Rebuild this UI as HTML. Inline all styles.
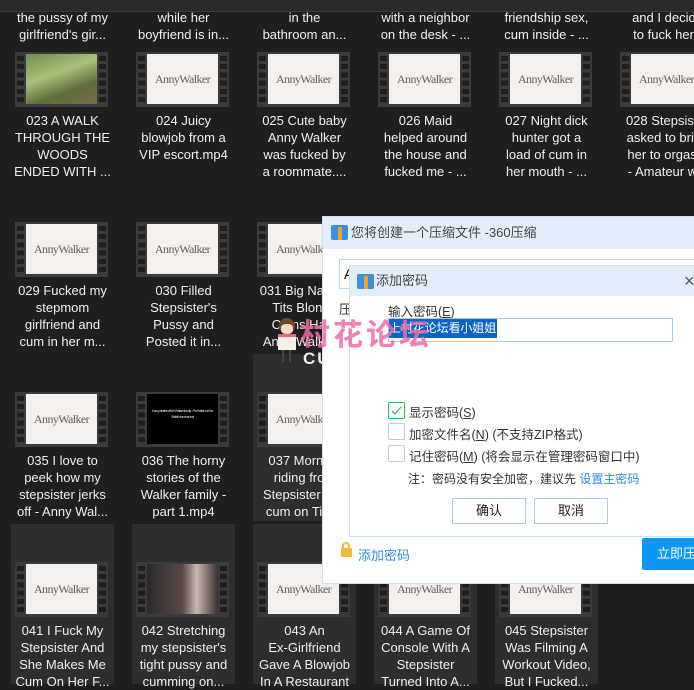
<!DOCTYPE html>
<html><head><meta charset="utf-8"><style>
*{margin:0;padding:0;box-sizing:border-box}
body{width:694px;height:681px;overflow:hidden;background:#1f1f1f;position:relative;font-family:"Liberation Sans","Noto Sans CJK SC",sans-serif}
.top{position:absolute;left:0;top:0;width:694px;height:12px;background:#2a2a2a;border-bottom:1px solid #3c3c3c}
.c{position:absolute;width:103px;height:170px;color:#f0f0f0;font-size:13px;line-height:17px;text-align:center}
.sel{background:#2e2e2e}
.t{position:absolute;left:4px;top:38px;width:93px;height:55px;background:#3b3b3b}
.t:before,.t:after{content:"";position:absolute;top:4px;width:7px;height:47px;background:repeating-linear-gradient(#1e1e1e 0 5px,transparent 5px 8.2px)}
.t:before{left:2px}.t:after{right:2px}
.im{position:absolute;left:11px;top:2px;width:71px;height:50px;background:#f4f0ee;color:#6a5a5e;font-family:"Liberation Serif",serif;font-size:12px;line-height:50px;letter-spacing:-.6px;white-space:nowrap;overflow:hidden}
.tx{position:absolute;left:0;width:103px;top:98px}
.row0{position:absolute;color:#f0f0f0;font-size:13px;line-height:17px;text-align:center;width:103px}
.dlg{position:absolute;left:322px;top:216px;width:380px;height:368px;background:#fff;border:1px solid #cfe0f0}
.tb{height:32px;background:#e2effb;font-size:13px;color:#444;line-height:32px;padding-left:28px;position:relative}
.ico{position:absolute;left:8px;top:8px;width:17px;height:15px;background:#3b8fe0;border-radius:2px}
.ico:after{content:"";position:absolute;left:7px;top:2px;width:4px;height:13px;background:#e9a52a}
.in{position:absolute;left:349px;top:265px;width:360px;height:272px;background:#fff;border:1px solid #cfe0f0}
.f{position:absolute;font-size:12.5px;color:#333}
.cb{position:absolute;left:388px;width:17px;height:17px;border:1px solid #c9c9c9;border-radius:2px;background:#fff}
.btn{position:absolute;top:498px;width:74px;height:26px;border:1px solid #aacbe8;background:#fff;font-size:13px;line-height:24px;text-align:center;color:#222}
</style></head><body>
<div class="top"></div>

<div class="row0" style="left:11px;top:9px">the pussy of my<br>girlfriend's gir...</div>
<div class="row0" style="left:132px;top:9px">while her<br>boyfriend is in...</div>
<div class="row0" style="left:253px;top:9px">in the<br>bathroom an...</div>
<div class="row0" style="left:374px;top:9px">with a neighbor<br>on the desk - ...</div>
<div class="row0" style="left:495px;top:9px">friendship sex,<br>cum inside - ...</div>
<div class="row0" style="left:616px;top:9px">and I decide<br>to fuck her -</div>

<div class="c" style="left:11px;top:14px"><div class="t"><div class="im" style="background:linear-gradient(160deg,#6f8f4a,#a9c07a 40%,#5f6f3a 70%,#7a6a4a)"></div></div><div class="tx">023 A WALK<br>THROUGH THE<br>WOODS<br>ENDED WITH ...</div></div>
<div class="c" style="left:132px;top:14px"><div class="t"><div class="im">AnnyWalker</div></div><div class="tx">024 Juicy<br>blowjob from a<br>VIP escort.mp4</div></div>
<div class="c" style="left:253px;top:14px"><div class="t"><div class="im">AnnyWalker</div></div><div class="tx">025 Cute baby<br>Anny Walker<br>was fucked by<br>a roommate....</div></div>
<div class="c" style="left:374px;top:14px"><div class="t"><div class="im">AnnyWalker</div></div><div class="tx">026 Maid<br>helped around<br>the house and<br>fucked me - ...</div></div>
<div class="c" style="left:495px;top:14px"><div class="t"><div class="im">AnnyWalker</div></div><div class="tx">027 Night dick<br>hunter got a<br>load of cum in<br>her mouth - ...</div></div>
<div class="c" style="left:616px;top:14px"><div class="t"><div class="im">AnnyWalker</div></div><div class="tx">028 Stepsister<br>asked to bring<br>her to orgasm<br>- Amateur w...</div></div>

<div class="c" style="left:11px;top:184px"><div class="t"><div class="im">AnnyWalker</div></div><div class="tx">029 Fucked my<br>stepmom<br>girlfriend and<br>cum in her m...</div></div>
<div class="c" style="left:132px;top:184px"><div class="t"><div class="im">AnnyWalker</div></div><div class="tx">030 Filled<br>Stepsister's<br>Pussy and<br>Posted it in...</div></div>
<div class="c" style="left:253px;top:184px"><div class="t"><div class="im">AnnyWalker</div></div><div class="tx">031 Big Natural<br>Tits Blonde<br>Cums Hard<br>Anny Walker...</div></div>

<div class="c" style="left:11px;top:354px"><div class="t"><div class="im">AnnyWalker</div></div><div class="tx">035 I love to<br>peek how my<br>stepsister jerks<br>off - Anny Wal...</div></div>
<div class="c" style="left:132px;top:354px"><div class="t"><div class="im" style="background:#000;color:#ddd;font-size:4px;line-height:6px;padding-top:14px;font-family:'Liberation Sans';white-space:normal">horny stories of the Walker family - Pa Watch on the BellaMorr channel</div></div><div class="tx">036 The horny<br>stories of the<br>Walker family -<br>part 1.mp4</div></div>
<div class="c sel" style="left:253px;top:354px;height:167px"><div class="t"><div class="im">AnnyWalker</div></div><div class="tx">037 Morning<br>riding from<br>Stepsister and<br>cum on Tits...</div></div>

<div class="c sel" style="left:11px;top:524px;height:160px"><div class="t"><div class="im">AnnyWalker</div></div><div class="tx">041 I Fuck My<br>Stepsister And<br>She Makes Me<br>Cum On Her F...</div></div>
<div class="c sel" style="left:132px;top:524px;height:160px"><div class="t"><div class="im" style="background:linear-gradient(90deg,#2a2a2e,#5a4a48 50%,#c9b8b0 70%,#3a3030)"></div></div><div class="tx">042 Stretching<br>my stepsister's<br>tight pussy and<br>cumming on...</div></div>
<div class="c sel" style="left:253px;top:524px;height:160px"><div class="t"><div class="im">AnnyWalker</div></div><div class="tx">043 An<br>Ex-Girlfriend<br>Gave A Blowjob<br>In A Restaurant</div></div>
<div class="c sel" style="left:374px;top:524px;height:160px"><div class="t"><div class="im">AnnyWalker</div></div><div class="tx">044 A Game Of<br>Console With A<br>Stepsister<br>Turned Into A...</div></div>
<div class="c sel" style="left:495px;top:524px;height:160px"><div class="t"><div class="im">AnnyWalker</div></div><div class="tx">045 Stepsister<br>Was Filming A<br>Workout Video,<br>But I Fucked...</div></div>

<div style="position:absolute;left:276px;top:318px;width:22px;height:46px">
<div style="position:absolute;left:3px;top:0;width:16px;height:16px;border-radius:50%;background:#6b4a2a"></div>
<div style="position:absolute;left:5px;top:6px;width:12px;height:10px;border-radius:40%;background:#f6dcc4"></div>
<div style="position:absolute;left:2px;top:16px;width:18px;height:16px;background:#f4eee8;border-top:3px solid #e86a8a"></div>
<div style="position:absolute;left:6px;top:32px;width:2px;height:12px;background:#444"></div>
<div style="position:absolute;left:13px;top:32px;width:2px;height:12px;background:#444"></div>
</div>
<div style="position:absolute;left:303px;top:349px;color:#eee;font-size:17px;font-weight:bold;letter-spacing:2px">CU</div>

<div class="dlg">
<div class="tb"><span class="ico"></span>您将创建一个压缩文件 -360压缩</div>
<div style="position:absolute;left:16px;top:42px;width:380px;height:30px;border:1px solid #b8d6ee;font-size:14px;line-height:28px;padding-left:4px">A</div>
<div class="f" style="left:16px;top:82px;font-size:13px">压</div>
<div style="position:absolute;left:18px;top:331px;width:11px;height:9px;background:#f5b93a;border-radius:1px"></div>
<div style="position:absolute;left:19px;top:325px;width:8px;height:8px;border:2px solid #f5b93a;border-bottom:none;border-radius:4px 4px 0 0"></div>
<div class="f" style="left:35px;top:328px;color:#2d8de0;font-size:13px">添加密码</div>
<div style="position:absolute;left:319px;top:321px;width:60px;height:32px;background:#0d98f5;border-radius:2px;color:#fff;font-size:13px;line-height:32px;padding-left:15px;white-space:nowrap">立即压缩</div>
</div>

<div class="in">
<div class="tb" style="height:30px;line-height:30px;padding-left:26px"><span class="ico" style="left:7px;top:8px"></span>添加密码<span style="position:absolute;left:334px;top:0;font-size:18px;color:#555">×</span></div>
</div>
<div class="f" style="left:388px;top:301px">输入密码(<u>E</u>)</div>
<div style="position:absolute;left:388px;top:318px;width:285px;height:24px;border:1px solid #a6cdea"></div>
<div style="position:absolute;left:389px;top:319px;width:108px;height:19px;background:#0b63c5;color:#fff;font-size:12px;line-height:19px;white-space:nowrap;overflow:hidden;letter-spacing:-0.1px">上村花论坛看小姐姐</div>
<div style="position:absolute;left:300px;top:312px;color:#f06aa8;font-size:30px;font-weight:bold;letter-spacing:3px;opacity:.85;font-family:'Noto Sans CJK SC',sans-serif;line-height:40px">村花论坛</div>

<div class="cb" style="top:402px;border-color:#2fbf5b"><svg width="15" height="15" viewBox="0 0 15 15" style="position:absolute;left:0;top:0"><path d="M3 8l3 3 6-7" stroke="#2fbf5b" stroke-width="1.3" fill="none"/></svg></div>
<div class="f" style="left:409px;top:402px">显示密码(<u>S</u>)</div>
<div class="cb" style="top:423px"></div>
<div class="f" style="left:409px;top:424px">加密文件名(<u>N</u>) (不支持ZIP格式)</div>
<div class="cb" style="top:445px"></div>
<div class="f" style="left:409px;top:446px">记住密码(<u>M</u>) (将会显示在管理密码窗口中)</div>
<div class="f" style="left:408px;top:470px;font-size:12px">注：密码没有安全加密，建议先 <span style="color:#2d8de0">设置主密码</span></div>
<div class="btn" style="left:452px">确认</div>
<div class="btn" style="left:534px">取消</div>
</body></html>
